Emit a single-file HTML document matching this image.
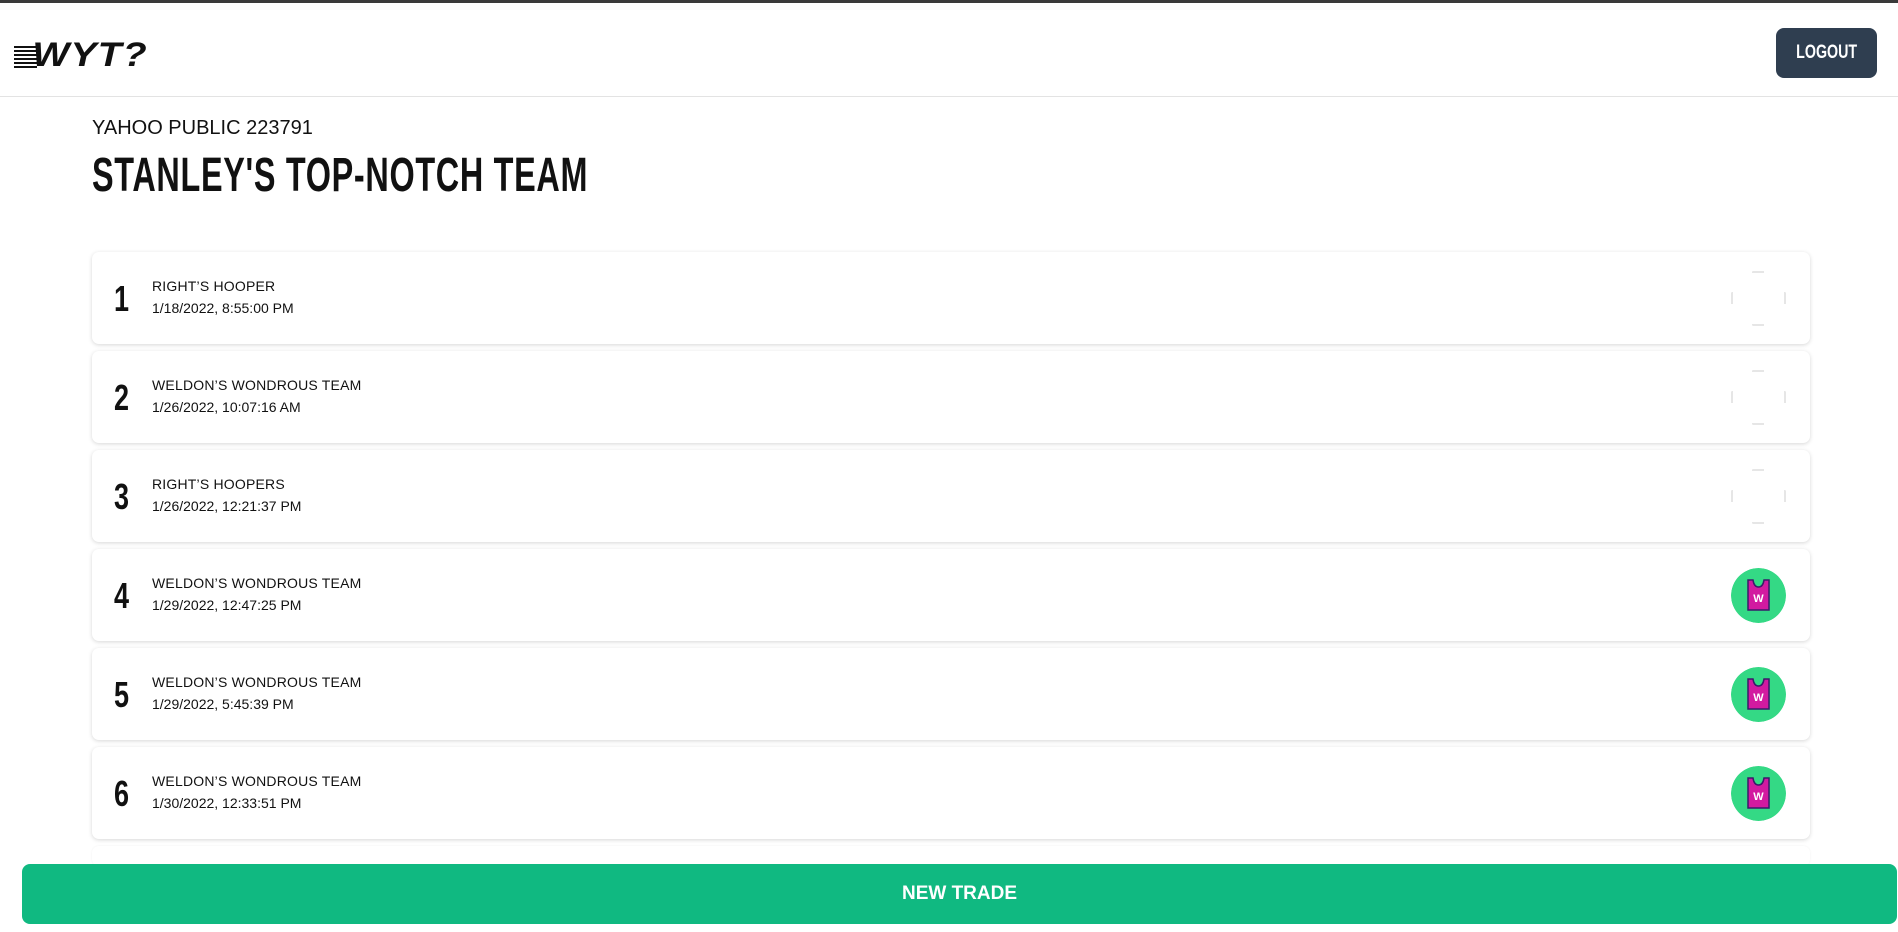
<!DOCTYPE html>
<html><head><meta charset="utf-8"><style>
*{margin:0;padding:0;box-sizing:border-box}
body{width:1898px;height:932px;overflow:hidden;background:#fff;font-family:"Liberation Sans",sans-serif;color:#111;position:relative}
.top{position:absolute;left:0;top:0;width:1898px;height:3px;background:#3a3a3a}
.hdr{position:absolute;left:0;top:3px;width:1898px;height:94px;border-bottom:1px solid #e3e3e3}
.logo{position:absolute;left:14px;top:33px;font:italic 900 34px "Liberation Sans",sans-serif;letter-spacing:1px;transform:scaleX(1.15);transform-origin:left}
.logo span{background:repeating-linear-gradient(#111 0 2px,#fff 2px 4px);display:inline-block;width:20px;height:22px;vertical-align:middle;margin-right:-4px}
.logout{position:absolute;left:1776px;top:25px;width:101px;height:50px;background:#2f3e50;border-radius:8px;color:#fff;font:bold 19px "Liberation Sans",sans-serif;display:flex;align-items:center;justify-content:center}
.logout b{transform:scaleX(.75);display:inline-block}
.sub{position:absolute;left:92px;top:117px;font-size:20px;color:#111}
.title{position:absolute;left:92px;top:148px;font:bold 48px "Liberation Sans",sans-serif;transform:scaleX(.675);transform-origin:left;letter-spacing:1px;white-space:nowrap}
.card{position:absolute;left:92px;width:1718px;height:92px;background:#fff;border-radius:7px;box-shadow:0 1px 4px rgba(0,0,0,.16)}
.num{position:absolute;left:22px;top:26px;font:bold 36px "Liberation Sans",sans-serif;transform:scaleX(.75);transform-origin:left}
.t1{position:absolute;left:60px;top:26px;font-size:14px;letter-spacing:.2px}
.t2{position:absolute;left:60px;top:48px;font-size:14px}
.av{position:absolute;left:1639px;top:19px;width:55px;height:55px;border-radius:50%}
.btn{position:absolute;left:22px;top:864px;width:1875px;height:60px;background:#10b981;border-radius:8px;color:#fff;display:flex;align-items:center;justify-content:center;font:bold 19px "Liberation Sans",sans-serif}
</style></head><body>
<div class="top"></div>
<div class="hdr">
<div class="logo"><span></span>WYT?</div>
<div class="logout"><b>LOGOUT</b></div>
</div>
<div class="sub">YAHOO PUBLIC 223791</div>
<div class="title">STANLEY'S TOP-NOTCH TEAM</div>

<div class="card" style="top:252px"><div class="num">1</div><div class="t1">RIGHT’S HOOPER</div><div class="t2">1/18/2022, 8:55:00 PM</div>
<svg class="av" viewBox="0 0 55 55"><path d="M21 1h12M21 54h12M1 21v12M54 21v12" stroke="#ccc" stroke-width="1"/></svg></div>
<div class="card" style="top:351px"><div class="num">2</div><div class="t1">WELDON’S WONDROUS TEAM</div><div class="t2">1/26/2022, 10:07:16 AM</div>
<svg class="av" viewBox="0 0 55 55"><path d="M21 1h12M21 54h12M1 21v12M54 21v12" stroke="#ccc" stroke-width="1"/></svg></div>
<div class="card" style="top:450px"><div class="num">3</div><div class="t1">RIGHT’S HOOPERS</div><div class="t2">1/26/2022, 12:21:37 PM</div>
<svg class="av" viewBox="0 0 55 55"><path d="M21 1h12M21 54h12M1 21v12M54 21v12" stroke="#ccc" stroke-width="1"/></svg></div>

<div class="card" style="top:549px"><div class="num">4</div><div class="t1">WELDON’S WONDROUS TEAM</div><div class="t2">1/29/2022, 12:47:25 PM</div>
<svg class="av" viewBox="0 0 55 55"><circle cx="27.5" cy="27.5" r="27.5" fill="#34d985"/><path d="M17 12h5q1 7 5.5 7t5.5-7h5v30H17z" fill="#d21aa0" stroke="#3a1a6a" stroke-width="1.5"/><text x="27.5" y="34" text-anchor="middle" font-family="Liberation Sans" font-weight="bold" font-size="11" fill="#fff">W</text></svg></div>
<div class="card" style="top:648px"><div class="num">5</div><div class="t1">WELDON’S WONDROUS TEAM</div><div class="t2">1/29/2022, 5:45:39 PM</div>
<svg class="av" viewBox="0 0 55 55"><circle cx="27.5" cy="27.5" r="27.5" fill="#34d985"/><path d="M17 12h5q1 7 5.5 7t5.5-7h5v30H17z" fill="#d21aa0" stroke="#3a1a6a" stroke-width="1.5"/><text x="27.5" y="34" text-anchor="middle" font-family="Liberation Sans" font-weight="bold" font-size="11" fill="#fff">W</text></svg></div>
<div class="card" style="top:747px"><div class="num">6</div><div class="t1">WELDON’S WONDROUS TEAM</div><div class="t2">1/30/2022, 12:33:51 PM</div>
<svg class="av" viewBox="0 0 55 55"><circle cx="27.5" cy="27.5" r="27.5" fill="#34d985"/><path d="M17 12h5q1 7 5.5 7t5.5-7h5v30H17z" fill="#d21aa0" stroke="#3a1a6a" stroke-width="1.5"/><text x="27.5" y="34" text-anchor="middle" font-family="Liberation Sans" font-weight="bold" font-size="11" fill="#fff">W</text></svg></div>
<div class="card" style="top:846px;height:20px;box-shadow:0 0 2px rgba(0,0,0,.06)"></div>

<div class="btn">NEW TRADE</div>
</body></html>
